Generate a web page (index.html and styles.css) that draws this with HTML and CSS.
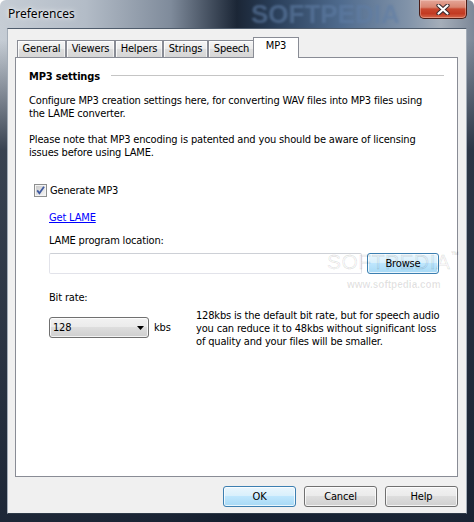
FILE: index.html
```html
<!DOCTYPE html>
<html>
<head>
<meta charset="utf-8">
<title>Preferences</title>
<link rel="stylesheet" href="styles.css">
</head>
<body>
<div class="window">
  <div class="titlebar">
    <span class="title">Preferences</span>
    <span class="tb-watermark">SOFTPEDIA</span>
    <div class="close">
      <svg width="14" height="11" viewBox="0 0 14 11">
        <path d="M2.5 1.5 L11.5 9.5 M11.5 1.5 L2.5 9.5" stroke="#3a2a2e" stroke-width="4.2" stroke-linecap="round" fill="none"/>
        <path d="M2.5 1.5 L11.5 9.5 M11.5 1.5 L2.5 9.5" stroke="#ffffff" stroke-width="2.2" stroke-linecap="round" fill="none"/>
      </svg>
    </div>
  </div>
  <div class="client">
    <div class="tabs">
      <div class="tab tab-general">General</div>
      <div class="tab tab-viewers">Viewers</div>
      <div class="tab tab-helpers">Helpers</div>
      <div class="tab tab-strings">Strings</div>
      <div class="tab tab-speech">Speech</div>
      <div class="tab tab-mp3 active">MP3</div>
    </div>
    <div class="panel">
      <div class="group-head"><span class="group-title">MP3 settings</span><span class="group-rule"></span></div>
      <p class="para">Configure MP3 creation settings here, for converting WAV files into MP3 files using<br>the LAME converter.</p>
      <p class="para second">Please note that MP3 encoding is patented and you should be aware of licensing<br>issues before using LAME.</p>
      <div class="check-row">
        <span class="checkbox">
          <svg width="13" height="13" viewBox="0 0 13 13">
            <defs>
              <linearGradient id="cbg" x1="0" y1="0" x2="1" y2="1">
                <stop offset="0" stop-color="#cbcbcb"/>
                <stop offset="1" stop-color="#f4f4f4"/>
              </linearGradient>
            </defs>
            <rect x="0.5" y="0.5" width="12" height="12" fill="#f4f4f4" stroke="#8e8f8f"/>
            <rect x="2" y="2" width="9" height="9" fill="url(#cbg)"/>
            <path d="M3.2 6.4 L5.4 9.2 L10 2.8" stroke="#3f5aa0" stroke-width="1.8" fill="none"/>
          </svg>
        </span>
        <span>Generate MP3</span>
      </div>
      <a class="link" href="#">Get LAME</a>
      <div class="field-label">LAME program location:</div>
      <div class="input-row">
        <div class="textbox"></div>
        <div class="btn btn-focus browse">Browse</div>
      </div>
      <div class="field-label bit-label">Bit rate:</div>
      <div class="bit-row">
        <div class="combo-group">
          <div class="combo">
            <span>128</span>
            <svg width="7" height="4" viewBox="0 0 7 4"><path d="M0 0 H7 L3.5 4 Z" fill="#000"/></svg>
          </div>
          <span class="unit">kbs</span>
        </div>
        <p class="bit-note">128kbs is the default bit rate, but for speech audio<br>you can reduce it to 48kbs without significant loss<br>of quality and your files will be smaller.</p>
      </div>
      <div class="watermark">SOFTPEDIA<span class="tm">™</span></div>
      <div class="watermark-url">www.softpedia.com</div>
    </div>
    <div class="buttons">
      <div class="btn btn-focus">OK</div>
      <div class="btn">Cancel</div>
      <div class="btn">Help</div>
    </div>
  </div>
</div>
</body>
</html>
```

FILE: styles.css
```css
html, body {
  margin: 0;
  padding: 0;
  background: #ffffff;
}

body {
  font-family: "DejaVu Sans Condensed", "DejaVu Sans", sans-serif;
  font-size: 11px;
  line-height: 13px;
  letter-spacing: -0.17px;
  color: #000;
}

.window {
  width: 474px;
  height: 522px;
  box-sizing: border-box;
  padding: 0 7px 8px 7px;
  display: flex;
  flex-direction: column;
  position: relative;
  overflow: hidden;
  border-radius: 6px 6px 0 0;
  background:
    linear-gradient(180deg, rgba(22,32,48,0) 0px, rgba(22,32,48,0) 40px, rgba(22,32,48,0.8) 150px, rgba(20,30,46,0.95) 100%),
    linear-gradient(90deg, #c6cdd5 0%, #b3bcc7 18%, #7f8b9b 36%, #1b2636 50%, #2a3f5a 58%, #4f6b8e 72%, #8193a9 86%, #a5aeb9 93%, #7d8898 100%);
}

.titlebar {
  height: 28px;
  display: flex;
  align-items: flex-start;
  position: relative;
  flex: none;
}

.title {
  font-family: "Noto Sans", "Open Sans", sans-serif;
  font-size: 12px;
  line-height: 16px;
  letter-spacing: 0;
  padding-top: 6px;
  padding-left: 1px;
  color: #000;
  text-shadow: 0 0 6px rgba(255,255,255,0.9), 0 0 3px rgba(255,255,255,0.8);
  position: relative;
  z-index: 1;
}

.tb-watermark {
  position: absolute;
  left: 244px;
  top: 1px;
  font-family: "Liberation Sans", sans-serif;
  font-weight: bold;
  font-size: 26px;
  line-height: 26px;
  letter-spacing: 0;
  color: rgba(95, 125, 165, 0.6);
  filter: blur(0.8px);
}

.close {
  margin-left: auto;
  width: 48px;
  height: 19px;
  box-sizing: border-box;
  border: 1px solid #4a1c16;
  border-top: 0;
  border-radius: 0 0 5px 5px;
  background: linear-gradient(180deg, #e4a698 0%, #d98571 40%, #c9482f 50%, #c23a22 75%, #d4664a 100%);
  box-shadow: inset 0 0 0 1px rgba(255,230,220,0.35);
  display: flex;
  align-items: center;
  justify-content: center;
  position: relative;
  z-index: 1;
}

.client {
  flex: 1;
  box-sizing: border-box;
  border: 1px solid;
  border-color: #4f5c6c #a3acb7 #2e3a48 #a3acb7;
  background: #f0f0f0;
  padding: 8px 8px 6px 7px;
  display: flex;
  flex-direction: column;
}

.tabs {
  display: flex;
  align-items: flex-end;
  height: 20px;
  padding-left: 2px;
  position: relative;
  z-index: 2;
  flex: none;
}

.tab {
  box-sizing: border-box;
  height: 17px;
  border: 1px solid #898c95;
  border-bottom: 0;
  background: linear-gradient(180deg, #f5f5f5 0%, #ebebeb 50%, #dedede 51%, #d6d6d6 100%);
  box-shadow: inset 1px 1px 0 rgba(255,255,255,0.8), inset -1px 0 0 rgba(255,255,255,0.6);
  text-align: center;
  line-height: 15px;
  white-space: nowrap;
}

.tab-general { width: 49px; }
.tab-viewers { width: 49px; }
.tab-helpers { width: 48px; }
.tab-strings { width: 45px; }
.tab-speech { width: 47px; }
.tab-mp3 { width: 46px; }

.tab.active {
  height: 21px;
  margin: 0 -2px -1px -2px;
  background: #ffffff;
  box-shadow: none;
  position: relative;
  z-index: 3;
}

.panel {
  height: 420px;
  box-sizing: border-box;
  border: 1px solid #898c95;
  background: #ffffff;
  padding: 12px 13px 0 13px;
  position: relative;
  flex: none;
}

.group-head {
  display: flex;
  align-items: center;
  height: 13px;
}

.group-title {
  font-weight: bold;
  white-space: nowrap;
}

.group-rule {
  flex: 1;
  height: 1px;
  background: #c5c5c5;
  margin-left: 11px;
  margin-top: -2px;
}

.para {
  margin: 11px 0 0 0;
  white-space: nowrap;
}

.para.second {
  margin-top: 13px;
}

.check-row {
  display: flex;
  align-items: center;
  height: 13px;
  margin-top: 25px;
  padding-left: 5px;
}

.checkbox {
  width: 13px;
  height: 13px;
  margin-right: 3px;
  display: block;
}

.checkbox svg {
  display: block;
}

.link {
  display: block;
  width: fit-content;
  margin-top: 14px;
  margin-left: 20px;
  color: #0000ff;
  text-decoration: underline;
}

.field-label {
  margin-top: 10px;
  margin-left: 20px;
}

.input-row {
  display: flex;
  gap: 5px;
  margin-top: 6px;
  margin-left: 20px;
  height: 21px;
}

.textbox {
  width: 313px;
  height: 21px;
  box-sizing: border-box;
  border: 1px solid #e2e3ea;
  border-top-color: #cdd0d6;
  border-radius: 2px;
  background: #ffffff;
}

.btn {
  width: 73px;
  height: 21px;
  box-sizing: border-box;
  border: 1px solid #707070;
  border-radius: 3px;
  background: linear-gradient(180deg, #f2f2f2 0%, #ebebeb 45%, #dddddd 50%, #cfcfcf 100%);
  box-shadow: inset 0 0 0 1px rgba(255,255,255,0.75);
  display: flex;
  align-items: center;
  justify-content: center;
  line-height: 13px;
}

.btn-focus {
  border-color: #3c7fb1;
  background: linear-gradient(180deg, #eaf6fd 0%, #d9f0fc 45%, #bee6fd 50%, #a7d9f5 100%);
}

.browse {
  width: 72px;
}

.bit-label {
  margin-top: 17px;
}

.bit-row {
  display: flex;
  margin-top: 5px;
  margin-left: 20px;
}

.combo-group {
  width: 147px;
  flex: none;
  display: flex;
  align-items: center;
  gap: 5px;
  height: 21px;
  margin-top: 8px;
}

.combo {
  width: 100px;
  height: 21px;
  box-sizing: border-box;
  border: 1px solid #707070;
  border-radius: 3px;
  background: linear-gradient(180deg, #f2f2f2 0%, #ebebeb 45%, #dddddd 50%, #cfcfcf 100%);
  box-shadow: inset 0 0 0 1px rgba(255,255,255,0.75);
  display: flex;
  align-items: center;
  justify-content: space-between;
  padding: 0 4px 0 3px;
}

.combo svg {
  display: block;
}

.bit-note {
  margin: 0;
  white-space: nowrap;
}

.watermark {
  position: absolute;
  left: 311px;
  top: 192px;
  font-family: "Liberation Sans", sans-serif;
  font-size: 21px;
  line-height: 24px;
  letter-spacing: 0.5px;
  color: rgba(0, 0, 0, 0.05);
  -webkit-text-stroke: 0.8px rgba(0,0,0,0.09);
  pointer-events: none;
}

.watermark .tm {
  font-size: 8px;
  vertical-align: top;
  line-height: 10px;
}

.watermark-url {
  position: absolute;
  left: 331px;
  top: 221px;
  font-family: "Liberation Sans", sans-serif;
  font-weight: bold;
  font-size: 10px;
  line-height: 12px;
  letter-spacing: 0;
  color: rgba(0, 0, 0, 0.12);
  pointer-events: none;
}

.buttons {
  display: flex;
  justify-content: flex-end;
  gap: 8px;
  margin-top: 9px;
  flex: none;
}
```
